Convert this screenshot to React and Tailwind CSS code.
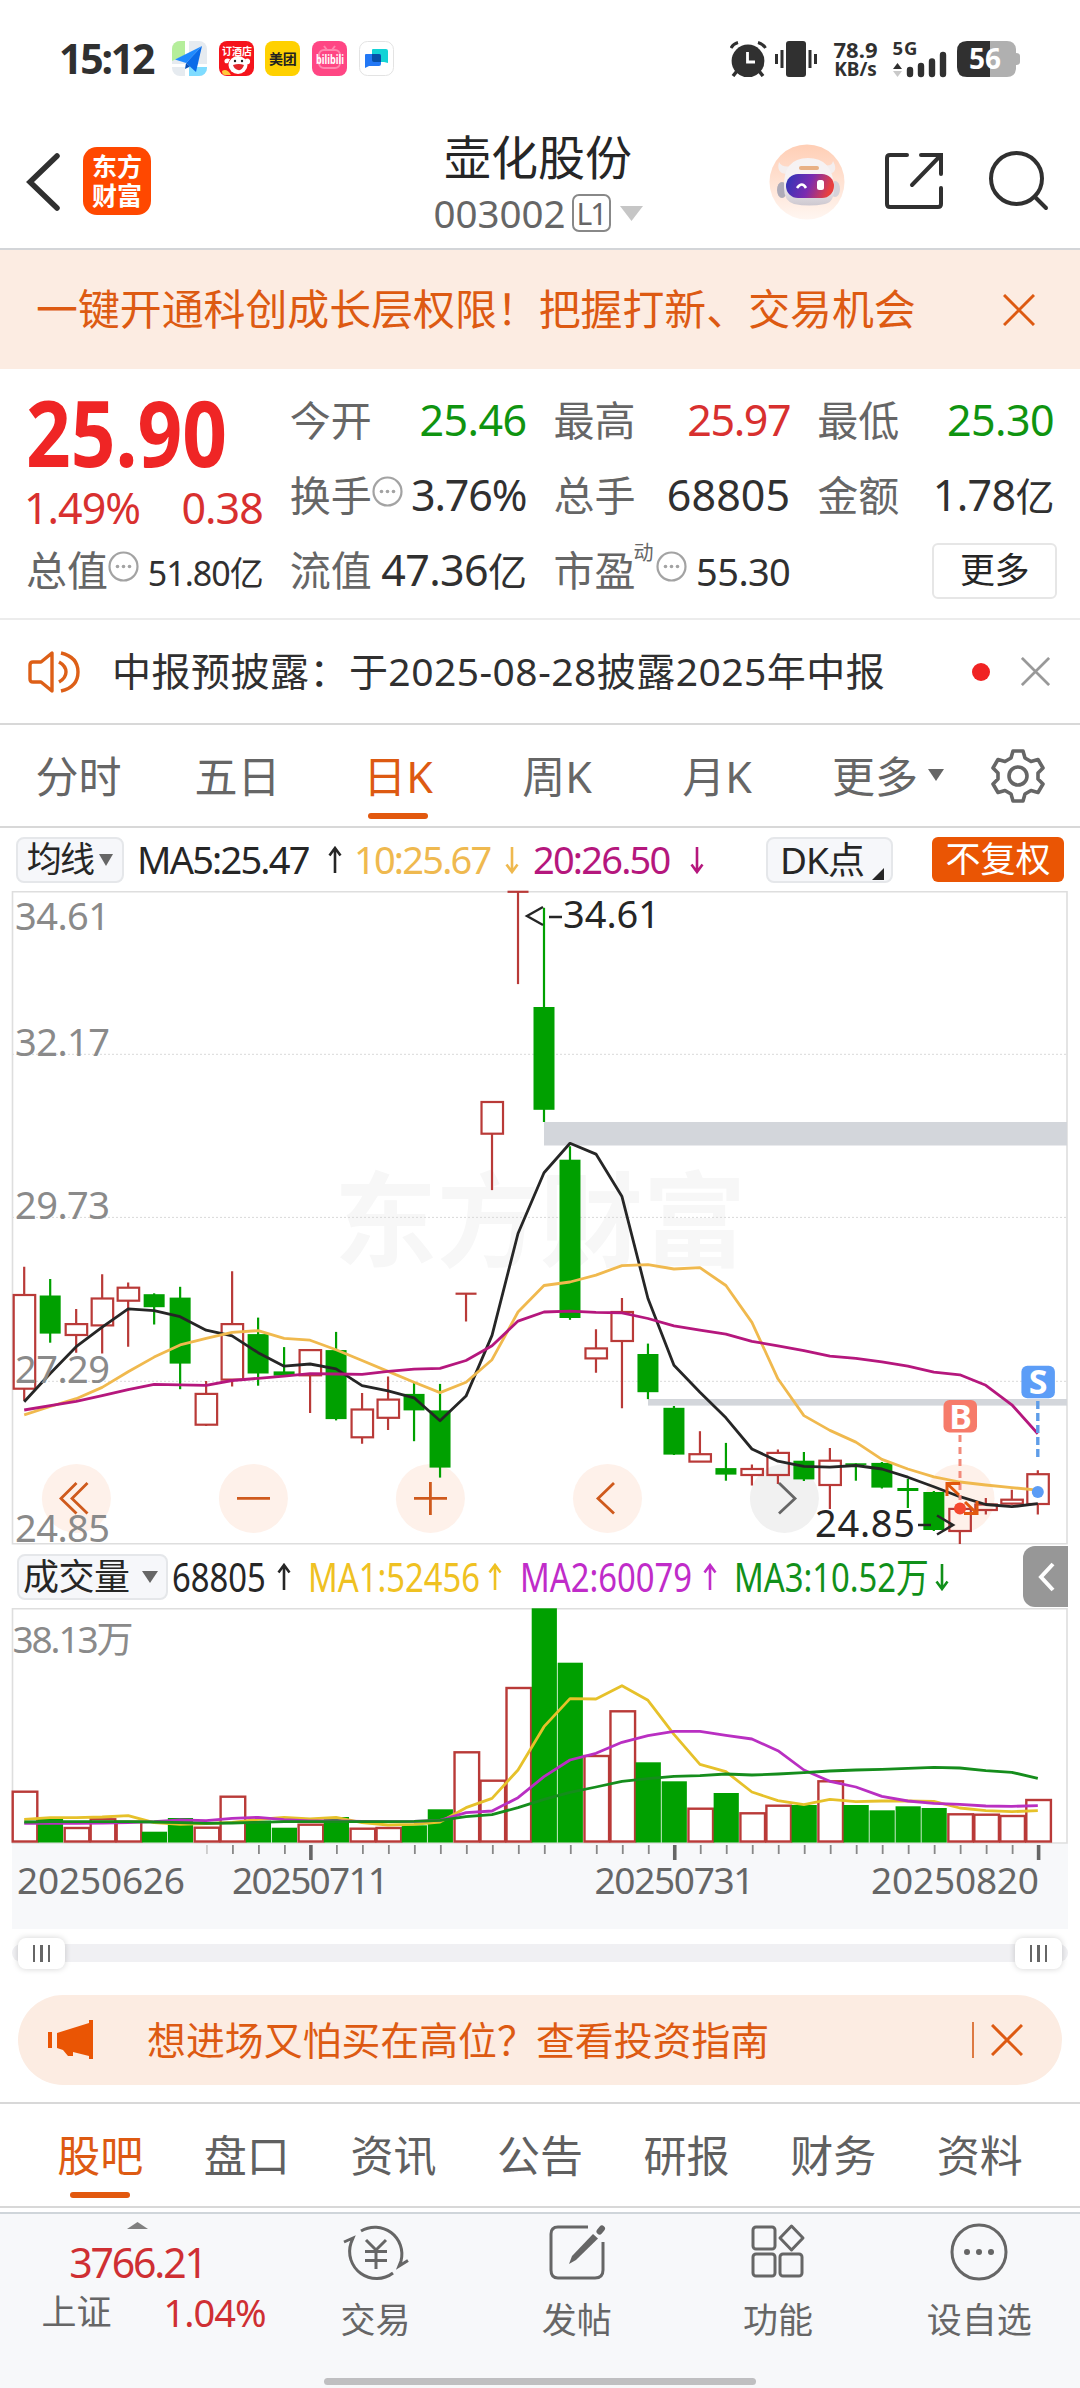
import React from "react";

// [color, high, top, bottom, low]
const candles = [
  ["r", 1266.8, 1295, 1388.7, 1400.4],
  ["g", 1279, 1295.5, 1333.6, 1342.7],
  ["r", 1308.9, 1324.1, 1335, 1352.7],
  ["r", 1274.2, 1298.5, 1325.4, 1353.6],
  ["r", 1282.5, 1287.7, 1300.7, 1346.7],
  ["g", 1293.3, 1294.2, 1307.2, 1324.5],
  ["g", 1286.8, 1297.6, 1363.6, 1389.2],
  ["r", 1380.9, 1393.9, 1424.7, 1426],
  ["r", 1271.2, 1324.1, 1379.6, 1386.6],
  ["g", 1317.6, 1334.1, 1373.5, 1385.7],
  ["g", 1347.1, 1371.4, 1375.7, 1375.7],
  ["r", 1350.1, 1350.1, 1375.3, 1413],
  ["g", 1331.9, 1350.1, 1419.1, 1420.4],
  ["r", 1393, 1409.5, 1437.3, 1443.8],
  ["r", 1376.6, 1399.6, 1417.8, 1429.9],
  ["g", 1383, 1393.9, 1410.4, 1441.2],
  ["g", 1383.9, 1410.4, 1467.6, 1477.6],
  ["r", 1293.7, 1293.7, 1293.7, 1321.5],
  ["r", 1102, 1102, 1133.7, 1190.1],
  ["r", 891.8, 891.8, 891.8, 984.1],
  ["g", 907.8, 1007, 1109.8, 1122],
  ["g", 1146.3, 1159.7, 1318, 1319.8],
  ["r", 1329.3, 1348.4, 1358.4, 1372.7],
  ["r", 1298, 1312, 1341, 1408.2],
  ["g", 1343.6, 1354, 1392.2, 1399.1],
  ["g", 1406, 1407.8, 1454.6, 1455],
  ["r", 1431.2, 1454.2, 1461.6, 1461.6],
  ["g", 1442.9, 1468.1, 1474.6, 1480.7],
  ["r", 1464.6, 1469, 1475, 1485.4],
  ["r", 1449.4, 1452.9, 1475, 1484],
  ["g", 1452, 1460.7, 1479.4, 1481],
  ["r", 1448.1, 1460.7, 1485, 1508.9],
  ["g", 1463.3, 1463.3, 1464.9, 1480.7],
  ["g", 1462, 1462.9, 1487.6, 1488.5],
  ["g", 1478.9, 1488, 1491, 1508],
  ["g", 1491, 1492, 1530, 1531],
  ["r", 1508, 1508.9, 1531, 1544],
  ["r", 1498, 1504.5, 1510, 1514.5],
  ["r", 1489.8, 1499.7, 1503.6, 1504.5],
  ["r", 1470.2, 1474.2, 1504, 1514.5],
];

const ma5 = [
  1401.7, 1373.5, 1346.7, 1327.1, 1308.9, 1310.7, 1316.7, 1330.2, 1335.8,
  1352.7, 1366.2, 1364, 1368.8, 1385.7, 1390.9, 1397.8, 1420.8, 1396.1, 1335.4,
  1233.5, 1172.7, 1143.3, 1154.1, 1196.6, 1298.5, 1365.3, 1392.2, 1417.8, 1449,
  1461.2, 1466.4, 1467.2, 1465.5, 1469, 1477.2, 1486.7, 1496.7, 1504.5, 1506.7,
  1503.7,
];
const ma10 = [
  1414.8, 1406.5, 1398.7, 1387.4, 1371.8, 1357.1, 1344.9, 1338.4, 1332.4,
  1330.6, 1338.4, 1340.2, 1349.7, 1360.5, 1371.4, 1382.2, 1392.6, 1382.2,
  1359.7, 1312, 1285.5, 1282, 1275.1, 1265.6, 1264.7, 1269, 1267.7, 1285.5,
  1322.4, 1378.8, 1415.6, 1430.4, 1442.1, 1459.4, 1469, 1476.8, 1482, 1485,
  1487.6, 1490.2,
];
const ma20 = [
  1410, 1405.6, 1401.3, 1395.7, 1389.6, 1384.4, 1384.8, 1385.3, 1380.5, 1378.3,
  1376.2, 1373.6, 1374, 1374.4, 1371.4, 1369.2, 1368.3, 1360.5, 1345.8, 1321.1,
  1312, 1311.1, 1312.4, 1312.8, 1318.5, 1325.8, 1330.2, 1334.1, 1341.4, 1345.8,
  1350.6, 1356.2, 1358.4, 1361.8, 1366.2, 1372.2, 1374.8, 1385.3, 1404.8,
  1433.8,
];

const volumes = [
  1791.7, 1819, 1828, 1819.3, 1821.7, 1831.7, 1818, 1827.7, 1796.7, 1820.7,
  1827.7, 1824.7, 1817, 1828.7, 1828, 1825.3, 1809.3, 1752.3, 1780.7, 1688,
  1608.3, 1662.7, 1756, 1711.3, 1762.3, 1781.3, 1808.7, 1793, 1813.3, 1805.7,
  1805, 1781.3, 1805, 1810.3, 1806.3, 1808, 1814.3, 1814.7, 1816, 1800,
];
const vma1 = [
  838, 833, 833, 831, 827, 848, 853, 851, 847, 838, 832, 837, 832, 848, 855,
  853, 846, 803, 775, 690, 560, 476, 477, 437, 481, 583, 673, 695, 756, 782,
  794, 778, 785, 783, 783, 784, 804, 812, 815, 812,
].map((v) => 1540 + v / 3);
const vma2 = [
  850, 850, 850, 849, 848, 845, 840, 842, 835, 832, 839, 843, 843, 844, 845,
  844, 841, 818, 813, 773, 710, 660, 640, 607, 587, 574, 574, 586, 597, 632,
  690, 724, 741, 769, 783, 790, 793, 798, 799, 797,
].map((v) => 1540 + v / 3);
const vma3 = [
  846, 845, 845, 845, 845, 846, 848, 850, 849, 847, 845, 845, 845, 845, 845,
  844, 841, 830, 824, 803, 778, 757, 741, 724, 716, 709, 707, 702, 705, 702,
  698, 693, 690, 688, 685, 682, 684, 692, 697, 715,
].map((v) => 1540 + v / 3);

const cx = (i) => 24.2 + 25.99 * i;
const toPoints = (list) => list.map((y, i) => `${cx(i)},${y}`).join(" ");

const RED = "#b93a38";
const GREEN = "#00a000";

const Arrow = ({ down }) => (
  <svg
    className="h-7 w-4 shrink-0"
    viewBox="0 0 16 28"
    fill="none"
    stroke="currentColor"
    strokeWidth="2.6"
  >
    {down ? <path d="M8 1V26M2.5 18.5L8 26L13.5 18.5" /> : <path d="M8 27V2M2.5 9.5L8 2L13.5 9.5" />}
  </svg>
);

const Triangle = ({ className }) => (
  <svg className={className} viewBox="0 0 16 12" preserveAspectRatio="none">
    <path d="M0 0H16L8 12Z" fill="currentColor" />
  </svg>
);

const Close = ({ className }) => (
  <svg className={className} viewBox="0 0 32 32" fill="none" stroke="currentColor" strokeWidth="3">
    <path d="M1 1L31 31M31 1L1 31" />
  </svg>
);

const Info = () => (
  <svg className="size-[31px] shrink-0 text-[#a3a3a3]" viewBox="0 0 31 31">
    <circle cx="15.5" cy="15.5" r="14" fill="none" stroke="currentColor" strokeWidth="2.2" />
    <circle cx="9.5" cy="15.5" r="1.8" fill="currentColor" />
    <circle cx="15.5" cy="15.5" r="1.8" fill="currentColor" />
    <circle cx="21.5" cy="15.5" r="1.8" fill="currentColor" />
  </svg>
);

const StatusBar = () => (
  <div className="flex h-[100px] items-start pt-[41px] pl-[59px] pr-[60px]">
    <span className="w-[113px] text-[41px] leading-[35px] font-bold tracking-[-2.2px] text-[#303030]">
      15:12
    </span>
    <div className="flex gap-[11.7px]">
      {/* Map */}
      <svg className="size-[35px]" viewBox="0 0 35 35">
        <defs>
          <clipPath id="tile">
            <rect width="35" height="35" rx="8" />
          </clipPath>
        </defs>
        <g clipPath="url(#tile)">
          <rect width="35" height="35" fill="#e6ebf0" />
          <path d="M0 0H13V14L0 20Z" fill="#b5ee9b" />
          <path d="M17 24H35V35H17Z" fill="#7fdcff" />
          <path d="M13 0H17V35H13ZM0 23H35V26H0Z" fill="#fff" />
        </g>
        <path d="M30 5L3 18.5L14 22Z" fill="#1f8bff" />
        <path d="M30 5L14 22L24 31Z" fill="#0a6be8" />
        <path d="M14 22L13 28L18 25.5Z" fill="#0550b8" />
      </svg>
      {/* Hotel booking */}
      <svg className="size-[35px]" viewBox="0 0 35 35">
        <rect width="35" height="35" rx="8" fill="#f5141c" />
        <text x="3" y="14" fontSize="10" fontWeight="700" fill="#fff">
          订酒店
        </text>
        <ellipse cx="19" cy="24" rx="9.5" ry="9" fill="#fff" />
        <path d="M11 18C4 15 4 24 9 22ZM26 18C33 15 32 25 28 23Z" fill="#fff" />
        <circle cx="16" cy="20" r="1.2" fill="#222" />
        <circle cx="23" cy="20" r="1.2" fill="#222" />
        <path d="M14 24Q20 22 25 24Q23 30 19 29Q15 28 14 24Z" fill="#e0262b" />
        <path d="M3 30Q8 27 12 34H6Q3 34 3 30Z" fill="#ffc93c" />
      </svg>
      <div className="flex size-[35px] items-center justify-center rounded-lg bg-[#ffd100] text-[14px] font-bold text-[#222]">
        美团
      </div>
      <svg className="size-[35px]" viewBox="0 0 35 35">
        <rect width="35" height="35" rx="8" fill="#ff4684" />
        <rect x="7" y="9" width="21" height="18" rx="5" fill="none" stroke="#ff86ae" strokeWidth="2" />
        <path d="M12 5L15 9M23 5L20 9" stroke="#ff86ae" strokeWidth="2" />
        <text x="4" y="23" fontSize="13" fontWeight="700" fill="#fff" textLength="28" lengthAdjust="spacingAndGlyphs">
          bilibili
        </text>
      </svg>
      <svg className="size-[35px]" viewBox="0 0 35 35">
        <rect x=".5" y=".5" width="34" height="34" rx="8" fill="#fff" stroke="#e3e3e3" />
        <path d="M14 8H27Q29 8 29 10V22L25 21H15Q13 21 13 19V9Q13 8 14 8Z" fill="#12d3d6" />
        <path d="M7 13H20Q22 13 22 15V23Q22 25 20 25H10L6 27V14Q6 13 7 13Z" fill="#2378f5" />
        <path d="M13 13H20Q22 13 22 15V21H15Q13 21 13 19Z" fill="#0750a8" />
      </svg>
    </div>
    <div className="ml-auto flex text-[#303030]">
      <svg className="h-9 w-[88px]" viewBox="0 0 88 36">
        <circle cx="18" cy="20" r="16.4" fill="#303030" />
        <path d="M17.5 11V21H25" fill="none" stroke="#fff" strokeWidth="2.8" />
        <path d="M1 7Q3 3 8 1.5M28 1.5Q33 3 35.5 7" fill="none" stroke="#303030" strokeWidth="3" />
        <path d="M7 30L3 35M29 30L33 35" stroke="#303030" strokeWidth="3.5" />
        <rect x="56" width="20" height="36" rx="3" fill="#303030" />
        <path d="M46.5 13V23M52 9V27M80 9V27M85.5 13V23" stroke="#303030" strokeWidth="3" />
      </svg>
      <div className="ml-[14px] flex w-[47px] flex-col items-center font-bold">
        <span className="text-[22px] leading-[16px]">78.9</span>
        <span className="mt-[4px] text-[19px] leading-[16px]">KB/s</span>
      </div>
      <svg className="ml-[14px] h-9 w-[56px] overflow-visible" viewBox="0 0 56 36">
        <text x="-0.5" y="14" fontSize="18.5" fontWeight="700" fill="#303030" textLength="25">
          5G
        </text>
        <path d="M0 28L4.5 22L9 28Z" fill="#303030" />
        <path d="M0 30L4.5 36L9 30Z" fill="#c9c9c9" />
        <path d="M17 29V33M28 25V33M39 20.5V33M50 14V33" stroke="#303030" strokeWidth="6.4" strokeLinecap="round" />
      </svg>
      <svg className="ml-[8px] h-9 w-[63px]" viewBox="0 0 63 36">
        <path d="M10 0H33V36H10Q0 36 0 26V10Q0 0 10 0Z" fill="#303030" />
        <path d="M33 0H50Q58 0 59 8V12Q63 12 63 15V21Q63 24 59 24V28Q58 36 50 36H33Z" fill="#b0b0b0" />
        <text x="12" y="28" fontSize="28" fontWeight="700" fill="#fff">
          56
        </text>
      </svg>
    </div>
  </div>
);

const Header = () => (
  <div className="flex h-[150px] items-start border-b-2 border-[#d3d5d8]">
    <svg className="mt-[51px] ml-[26px] h-[62px] w-[35px]" viewBox="0 0 35 62">
      <path d="M31 5L4 31L31 57" fill="none" stroke="#303030" strokeWidth="5.5" strokeLinecap="round" />
    </svg>
    <div className="mt-[47px] ml-[22px] flex h-[68px] w-[68px] items-center justify-center rounded-[14px] bg-[#ff4800] text-center text-[25px] leading-[29px] font-bold text-white">
      东方
      <br />
      财富
    </div>
    <div className="ml-[219px] flex w-[336px] flex-col items-center pt-[30px]">
      <h1 className="text-[47px] leading-[54px] text-[#262626]">壶化股份</h1>
      <div className="mt-[7px] flex items-center text-[#666]">
        <span className="text-[38.5px] leading-[44px]">003002</span>
        <span className="ml-1.5 flex h-[38px] w-[39px] items-center justify-center rounded-[7px] border-2 border-[#888] text-[30px] tracking-[-2px]">
          L1
        </span>
        <Triangle className="ml-[9px] h-[15px] w-[23px] text-[#c6c6c6]" />
      </div>
    </div>
    {/* Assistant avatar */}
    <svg className="mt-[44px] ml-[63px] size-[76px]" viewBox="0 0 76 76">
      <defs>
        <linearGradient id="halo" x1="0" y1="0" x2="0" y2="1">
          <stop offset="0" stopColor="#ffceb5" />
          <stop offset="1" stopColor="#fff6f1" />
        </linearGradient>
        <linearGradient id="shell" x1="0" y1="0" x2="0" y2="1">
          <stop offset="0.5" stopColor="#f6f2f3" />
          <stop offset="1" stopColor="#cdc8d0" />
        </linearGradient>
        <linearGradient id="visor" x1="0" y1="0" x2="1" y2="0.2">
          <stop offset="0" stopColor="#2b35b8" />
          <stop offset="0.55" stopColor="#7a2bb0" />
          <stop offset="1" stopColor="#e8403f" />
        </linearGradient>
      </defs>
      <circle cx="38" cy="38" r="37.5" fill="url(#halo)" />
      <path d="M10 18Q7 29 17 30L23 22Q13 24 10 18ZM64 17Q70 28 60 30L54 21Q63 23 64 17Z" fill="#f4eeee" />
      <ellipse cx="13" cy="46" rx="5" ry="8" fill="#aeabb8" />
      <ellipse cx="66" cy="45" rx="5" ry="8" fill="#d5d2da" />
      <path d="M15 44Q14 14 39 14Q63 14 65 42Q66 58 56 60Q40 63 25 60Q15 57 15 44Z" fill="url(#shell)" />
      <rect x="30" y="22" width="20" height="4" rx="2" fill="#e8b085" />
      <rect x="17" y="30" width="48" height="24" rx="12" fill="url(#visor)" />
      <path d="M28 44Q33 37 37 44" fill="none" stroke="#fff" strokeWidth="2.6" />
      <rect x="48" y="36" width="7" height="10" rx="2.5" fill="#fff" />
    </svg>
    <svg className="mt-[51px] ml-[39px] size-[60px]" viewBox="0 0 60 60" fill="none" stroke="#303030" strokeWidth="4">
      <path d="M23 4H6Q3 4 3 7V53Q3 56 6 56H54Q57 56 57 53V37M37 4H57V23M57 4L28 34" strokeLinecap="round" />
    </svg>
    <svg className="mt-[50px] ml-[44px] size-[61px]" viewBox="0 0 61 61" fill="none" stroke="#303030" strokeWidth="4">
      <circle cx="28.5" cy="28.5" r="25.5" />
      <path d="M46.5 46.5L58 58" strokeLinecap="round" />
    </svg>
  </div>
);

const Quote = () => (
  <div className="grid h-[251px] grid-cols-4 grid-rows-[75px_75px_75px] gap-x-[27px] border-b-2 border-[#ececec] px-[26px] pt-[14px] text-[43px] tracking-[-0.6px] text-[#303030]">
    <div className="row-span-2 flex flex-col text-[#d8302f]">
      <span className="mt-[3px] origin-left scale-x-[0.86] text-[91px] leading-[92px] font-bold tracking-normal text-[#ef2525]">
        25.90
      </span>
      <div className="mt-[6px] flex justify-between text-[43px] leading-[48px] tracking-[-1px]">
        <span className="-ml-0.5">1.49%</span>
        <span>0.38</span>
      </div>
    </div>
    <Cell label="今开">
      <span className="text-[#0f9410]">25.46</span>
    </Cell>
    <Cell label="最高">
      <span className="tracking-[-1.4px] text-[#d8302f]">25.97</span>
    </Cell>
    <Cell label="最低">
      <span className="text-[#0f9410]">25.30</span>
    </Cell>
    <Cell label="换手" info>
      <span className="tracking-[-1.1px]">3.76%</span>
    </Cell>
    <Cell label="总手">
      <span className="tracking-[0.1px]">68805</span>
    </Cell>
    <Cell label="金额">
      1.78<span className="text-[39px]">亿</span>
    </Cell>
    <Cell label="总值" info>
      <span className="text-[34px] tracking-[-1px]">51.80亿</span>
    </Cell>
    <Cell label="流值">
      47.36<span className="text-[39px]">亿</span>
    </Cell>
    <Cell label="市盈" info sup="动">
      <span className="text-[38px]">55.30</span>
    </Cell>
    <div className="-mr-[3px] flex h-[56px] w-[125px] items-center justify-center place-self-end self-center rounded-md border-2 border-[#e6e6e6] text-[35px] text-[#262626]">
      更多
    </div>
  </div>
);

const Cell = ({ label, info, sup, children }) => (
  <div className="flex items-center whitespace-nowrap">
    <span className="text-[41px] tracking-normal text-[#666]">{label}</span>
    {sup && <span className="mb-9 -ml-0.5 w-[22px] text-[20px] text-[#666]">{sup}</span>}
    {info && (
      <span className="mb-2">
        <Info />
      </span>
    )}
    <span className="ml-auto">{children}</span>
  </div>
);

const News = () => (
  <div className="flex h-[105px] items-center border-b-2 border-[#d8d8d8] pl-[28px] pr-[30px]">
    <svg className="h-[46px] w-[54px]" viewBox="0 0 54 46" fill="none" stroke="#dd5f17" strokeWidth="3.4">
      <path d="M24 4V42L13 33H5Q2 33 2 30V16Q2 13 5 13H13Z" strokeLinejoin="round" />
      <path d="M31 13Q38 17 38 23Q38 29 31 33M33 4Q50 8 50 23Q50 38 33 42" />
    </svg>
    <p className="ml-[30px] text-[39px] tracking-[0.48px] whitespace-nowrap text-[#303030]">
      中报预披露：于2025-08-28披露2025年中报
    </p>
    <span className="mr-[31px] ml-auto size-[18px] rounded-full bg-[#f02323]" />
    <Close className="size-[29px] text-[#999]" />
  </div>
);

const periodTabs = [
  { name: "分时", width: "w-[157px]" },
  { name: "五日", width: "w-[161px]" },
  { name: "日K", width: "w-[160px]", active: true },
  { name: "周K", width: "w-[158px]" },
  { name: "月K", width: "w-[162px]" },
];

const PeriodTabs = () => (
  <div className="flex h-[103px] items-stretch border-b-2 border-[#d8d8d8] text-[43px] text-[#666]">
    {periodTabs.map((tab) => (
      <div key={tab.name} className={`flex flex-col items-center pt-[22px] ${tab.width}`}>
        <span className={tab.active ? "leading-[60px] text-[#dd5a12]" : "leading-[60px]"}>{tab.name}</span>
        {tab.active && <span className="mt-[6px] h-1.5 w-[60px] rounded-full bg-[#e2580e]" />}
      </div>
    ))}
    <div className="ml-[34px] flex items-start pt-[22px] leading-[60px]">
      更多
      <Triangle className="mt-[22px] ml-[10px] h-3 w-4" />
    </div>
    <svg className="mt-[24px] ml-[47px] size-[54px]" viewBox="0 0 54 54" fill="none" stroke="#666" strokeWidth="3.6" strokeLinejoin="round">
      <path d="M22 2H32L34 9L40 12.5L47 10.5L52 19L47 24V30L52 35L47 43.5L40 41.5L34 45L32 52H22L20 45L14 41.5L7 43.5L2 35L7 30V24L2 19L7 10.5L14 12.5L20 9Z" />
      <circle cx="27" cy="27" r="9" />
    </svg>
  </div>
);

const MaBar = () => (
  <div className="flex h-[63px] items-center pl-4 text-[38px] tracking-[-1.8px] whitespace-nowrap">
    <div className="flex h-[46px] w-[108px] items-center justify-center gap-1.5 rounded-lg border-2 border-[#e5e7ea] bg-[#f6f7fa] text-[35px] text-[#262626]">
      均线
      <Triangle className="h-3 w-3.5 text-[#666]" />
    </div>
    <div className="ml-[13px] flex w-[206px] items-center justify-between text-[#262626]">
      MA5:25.47
      <Arrow />
    </div>
    <div className="ml-[11px] flex w-[166px] items-center justify-between text-[#efb94f]">
      10:25.67
      <Arrow down />
    </div>
    <div className="ml-[13px] flex w-[172px] items-center justify-between text-[#b5177d]">
      20:26.50
      <Arrow down />
    </div>
    <div className="ml-[61px] flex h-[46px] w-[127px] items-center rounded-lg border-2 border-[#e5e7ea] bg-[#f6f7fa] pl-3 text-[37px] tracking-[-1px] text-[#262626]">
      DK点
      <svg className="mt-7 ml-2 size-3" viewBox="0 0 12 12">
        <path d="M12 0V12H0Z" fill="#262626" />
      </svg>
    </div>
    <div className="ml-[39px] flex h-[45px] w-[132px] items-center justify-center rounded-md bg-[#ea5504] text-[35px] tracking-normal text-white">
      不复权
    </div>
  </div>
);

const axisLabels = [
  ["34.61", 930],
  ["32.17", 1056],
  ["29.73", 1218.5],
  ["27.29", 1382.5],
  ["24.85", 1542],
];

const PriceChart = () => (
  <svg className="block h-[654px] w-[1080px] overflow-visible" viewBox="0 891 1080 654">
    <text x="334" y="1259" fontSize="103" fontWeight="700" fill="#f7f7f7">
      东方财富
    </text>
    <path d="M12 1054.3H1067M12 1217.4H1067M12 1381.3H1067" stroke="#d9d9d9" strokeWidth="1" strokeDasharray="2 2" />
    <path d="M12.5 891.8H1067V1543.8H12.5Z" fill="none" stroke="#dedede" strokeWidth="1.6" />
    <rect x="544" y="1122" width="523" height="23.5" fill="#d3d6db" />
    <rect x="648" y="1399" width="419" height="6.6" fill="#d3d6db" />

    {/* Control backgrounds */}
    <g fill="#fef1ea">
      <circle cx="76.4" cy="1498.4" r="34.5" />
      <circle cx="253.4" cy="1498.4" r="34.5" />
      <circle cx="430.4" cy="1498.4" r="34.5" />
      <circle cx="607.5" cy="1498.4" r="34.5" />
      <circle cx="784.4" cy="1498.4" r="34.5" fill="#f1f1f1" />
      <circle cx="960" cy="1498.4" r="34.5" />
    </g>

    {candles.map(([color, high, top, bottom, low], i) =>
      color === "g" ? (
        <g key={i} fill={GREEN}>
          <rect x={cx(i) - 1.1} y={high} width="2.2" height={low - high} />
          <rect x={cx(i) - 10.5} y={top} width="21" height={bottom - top} />
        </g>
      ) : (
        <g key={i} fill="none" stroke={RED} strokeWidth="2.2">
          <path d={`M${cx(i)} ${high}V${top}M${cx(i)} ${bottom}V${low}`} />
          {top === bottom ? (
            <path d={`M${cx(i) - 10.5} ${top}h21`} />
          ) : (
            <rect x={cx(i) - 10.5} y={top} width="21.5" height={bottom - top} />
          )}
        </g>
      )
    )}

    <g fill="none" strokeWidth="2.8" strokeLinejoin="round">
      <polyline points={toPoints(ma5)} stroke="#262626" />
      <polyline points={toPoints(ma10)} stroke="#f0b94e" />
      <polyline points={toPoints(ma20)} stroke="#b5177d" />
    </g>

    <g fill="none" stroke="#cf5a1d" strokeWidth="2.8">
      <path d="M76.5 1483L61 1498.4L76.5 1513.5M87.5 1483L72 1498.4L87.5 1513.5" />
      <path d="M237 1498.4H270M414 1498.4H447M430.4 1482V1515" />
      <path d="M614 1483L598 1498.4L614 1513.5" />
      <path d="M779 1483L795 1498.4L779 1513.5" stroke="#666" />
    </g>

    <g fontSize="38" fill="#8a8a8a">
      {axisLabels.map(([label, y]) => (
        <text key={label} x="15" y={y} textLength="95">
          {label}
        </text>
      ))}
    </g>

    <g fontSize="38" fill="#262626" stroke="none">
      <text x="563" y="928" textLength="97">
        34.61
      </text>
      <text x="815" y="1537" textLength="100">
        24.85
      </text>
      <path d="M543 907L527 916L543 925M549 917H562" fill="none" stroke="#262626" strokeWidth="2.4" />
      <path d="M918 1525H931M937 1515.5L953 1525L937 1534.5" fill="none" stroke="#262626" strokeWidth="2.6" />
    </g>

    {/* Buy / sell marks */}
    <path d="M960 1435V1500" stroke="#f28a7a" strokeWidth="3" strokeDasharray="7 5" />
    <path d="M1037.8 1401V1457" stroke="#5f9de8" strokeWidth="3.4" strokeDasharray="8 4" />
    <circle cx="960" cy="1508.5" r="6" fill="#f5482f" />
    <circle cx="1037.8" cy="1492" r="6" fill="#5b9cf5" />
    <rect x="943.5" y="1400" width="33.5" height="32.5" rx="6" fill="#f67b6a" />
    <rect x="1021.4" y="1365.7" width="33.5" height="32.5" rx="6" fill="#5c9df7" />
    <g fontSize="34" fontWeight="700" fill="#fff" textAnchor="middle">
      <text x="960.5" y="1428.5">
        B
      </text>
      <text x="1038" y="1394">
        S
      </text>
    </g>
    <path d="M947 1496V1483.5H960M947 1483.5L959 1495M977 1501V1513.5H964M977 1513.5L965 1502" fill="none" stroke="#e2580e" strokeWidth="3" />
  </svg>
);

const Condensed = ({ children }) => (
  <span className="inline-block w-0 flex-1 origin-left scale-x-[0.82]">{children}</span>
);

const VolumeBar = () => (
  <div className="flex h-[63px] items-center pl-[17px] text-[40px] whitespace-nowrap">
    <div className="flex h-[46px] w-[151px] items-center justify-between rounded-lg border-2 border-[#e5e7ea] bg-[#f6f7fa] pr-2 pl-1 text-[36px] tracking-[-0.5px] text-[#262626]">
      成交量
      <Triangle className="h-3 w-4 text-[#666]" />
    </div>
    <div className="ml-[4px] flex w-[120px] items-center text-[#262626]">
      <Condensed>68805</Condensed>
      <Arrow />
    </div>
    <div className="ml-[16px] flex w-[195px] items-center text-[#efc122]">
      <Condensed>MA1:52456</Condensed>
      <Arrow />
    </div>
    <div className="ml-[17px] flex w-[198px] items-center text-[#c02cc9]">
      <Condensed>MA2:60079</Condensed>
      <Arrow />
    </div>
    <div className="ml-[16px] flex w-[216px] items-center text-[#11901a]">
      <Condensed>MA3:10.52万</Condensed>
      <Arrow down />
    </div>
    <div className="mr-[12px] ml-auto flex h-[61px] w-[45px] items-center justify-center rounded-l-xl bg-[#979797]">
      <svg className="h-8 w-5" viewBox="0 0 20 32">
        <path d="M17 3L5 16L17 29" fill="none" stroke="#fff" strokeWidth="4" />
      </svg>
    </div>
  </div>
);

const ticks = Array.from({ length: 33 }, (_, i) => i + 7);

const VolumeChart = () => (
  <svg className="block h-[321px] w-[1080px]" viewBox="0 1608 1080 321">
    <rect x="12" y="1843" width="1056" height="86" fill="#f7f8fa" />
    <path d="M12.5 1608.8H1067V1843H12.5Z" fill="none" stroke="#dedede" strokeWidth="1.6" />
    <text x="12.5" y="1652.5" fontSize="37" fill="#8a8a8a" textLength="121">
      38.13万
    </text>
    {volumes.map((y, i) =>
      candles[i][0] === "g" ? (
        <rect key={i} x={cx(i) - 12.3} y={y} width="25.2" height={1842.5 - y} fill={GREEN} />
      ) : (
        <rect
          key={i}
          x={cx(i) - 11.5}
          y={y}
          width="24.6"
          height={1841.5 - y}
          fill="#fff"
          stroke={RED}
          strokeWidth="2.4"
        />
      )
    )}
    <g fill="none" strokeWidth="2.8" strokeLinejoin="round">
      <polyline points={toPoints(vma1)} stroke="#e6c12a" />
      <polyline points={toPoints(vma2)} stroke="#b92fc2" />
      <polyline points={toPoints(vma3)} stroke="#158d1c" />
    </g>
    {ticks.map((i) =>
      i === 11 || i === 25 || i === 39 ? (
        <path key={i} d={`M${cx(i) + 0.8} 1845V1860`} stroke="#666" strokeWidth="3.6" />
      ) : (
        <path key={i} d={`M${cx(i) + 0.8} 1845V1854`} stroke={i === 7 ? "#ccc" : "#888"} strokeWidth="1.8" />
      )
    )}
    <g fontSize="37" fill="#666">
      <text x="17" y="1894" textLength="168">20250626</text>
      <text x="232" y="1894" textLength="157">20250711</text>
      <text x="594.5" y="1894" textLength="160">20250731</text>
      <text x="871" y="1894" textLength="168">20250820</text>
    </g>
  </svg>
);

const Thumb = () => (
  <div className="flex h-[31px] w-[47px] items-center justify-center gap-[5px] rounded-lg bg-white shadow-[0_0_6px_rgba(0,0,0,0.18)]">
    <span className="h-[17px] w-[2.5px] bg-[#666]" />
    <span className="h-[17px] w-[2.5px] bg-[#666]" />
    <span className="h-[17px] w-[2.5px] bg-[#666]" />
  </div>
);

const RangeSlider = () => (
  <div className="flex h-[66px] items-start px-3 pt-[15px]">
    <div className="flex h-[18px] w-full items-center justify-between rounded-full bg-[#f0f0f3] px-[6px]">
      <Thumb />
      <Thumb />
    </div>
  </div>
);

const Promo = () => (
  <div className="mx-[18px] mb-[17px] flex h-[90px] items-center rounded-full bg-[#fcece2] pr-[39px] pl-[30px] text-[#dd5a12]">
    <svg className="h-[40px] w-[46px]" viewBox="0 0 46 40" fill="#ea5504">
      <path d="M0 12H4V28H0ZM9 13L41 3V0H45V39H41V36L25 32V36H20L15 30L9 28Z" />
    </svg>
    <p className="ml-[53px] text-[38.9px] whitespace-nowrap">想进场又怕买在高位？查看投资指南</p>
    <span className="mr-[17px] ml-auto h-9 w-[2px] bg-[#dd7a43]" />
    <Close className="size-8" />
  </div>
);

const sections = ["股吧", "盘口", "资讯", "公告", "研报", "财务", "资料"];

const SectionTabs = () => (
  <div className="flex h-[106px] border-y-2 border-[#d8d8d8] px-[27px] text-[43px] text-[#606060]">
    {sections.map((name, i) => (
      <div key={name} className="flex flex-1 flex-col items-center pt-[22px]">
        <span className={i === 0 ? "leading-[60px] text-[#dd5a12]" : "leading-[60px]"}>{name}</span>
        {i === 0 && <span className="mt-[6px] h-1.5 w-[60px] rounded-full bg-[#e2580e]" />}
      </div>
    ))}
  </div>
);

const navItems = [
  {
    name: "交易",
    icon: (
      <>
        <path d="M15 9A27 27 0 0 1 55 39L53 44L62 38.5M-2 20L7 16L5 21A27 27 0 0 0 47 51" />
        <path d="M20 18L30 28L40 18M19 29.5H41M19 38.5H41M30 28V47" />
      </>
    ),
  },
  {
    name: "发帖",
    icon: (
      <>
        <path d="M41 5H11Q4 5 4 12V48Q4 56 11 56H48Q56 56 56 48V20" />
        <path d="M52.5 9.5L55 6.5" strokeWidth="6" strokeLinecap="round" />
        <path d="M46 12L51 16.5L29 38L22 42L25 34Z" fill="#666" stroke="none" />
      </>
    ),
  },
  {
    name: "功能",
    icon: (
      <>
        <rect x="5" y="5" width="22" height="22" rx="3" />
        <rect x="5" y="32" width="22" height="22" rx="3" />
        <rect x="32" y="32" width="22" height="22" rx="3" />
        <path d="M43.5 4L55 16L43.5 28L32 16Z" strokeLinejoin="round" />
      </>
    ),
  },
  {
    name: "设自选",
    icon: (
      <>
        <circle cx="30" cy="30" r="27" />
        <path d="M18 30h.01M30 30h.01M42 30h.01" strokeWidth="6" strokeLinecap="round" />
      </>
    ),
  },
];

const BottomBar = () => (
  <div className="mt-[4px] flex h-[176px] flex-col border-t-2 border-[#cfd5da] bg-[#f7f8fa]">
    <div className="flex h-[164px]">
      <div className="flex w-[275px] flex-col items-center pt-[8px] text-[#cf2f33]">
        <svg className="h-[7px] w-[21px]" viewBox="0 0 21 7">
          <path d="M0 7L10.5 0L21 7Z" fill="#808080" />
        </svg>
        <span className="mt-[6px] text-[41px] leading-[54px] tracking-[-2.2px]">3766.21</span>
        <div className="ml-[32px] flex w-[224px] items-center justify-between text-[38px] leading-[46px] tracking-[-1px]">
          <span className="text-[35px] tracking-normal text-[#666]">上证</span>
          1.04%
        </div>
      </div>
      {navItems.map((item) => (
        <div key={item.name} className="flex flex-1 flex-col items-center pt-[8px] text-[35px] text-[#666]">
          <svg className="size-[60px] overflow-visible" viewBox="0 0 60 60" fill="none" stroke="#666" strokeWidth="3">
            {item.icon}
          </svg>
          <span className="mt-[13px] leading-[50px]">{item.name}</span>
        </div>
      ))}
    </div>
    <div className="mx-auto h-[7px] w-[432px] rounded-full bg-[#bfbfc1]" />
  </div>
);

const App = () => {
  return (
    <div
      lang="zh-CN"
      className="h-[2388px] w-[1080px] overflow-hidden bg-white font-['Noto_Sans','Noto_Sans_CJK_SC',sans-serif]"
    >
      <StatusBar />
      <Header />
      <div className="flex h-[119px] items-center justify-between bg-[#fcece2] pr-[45px] pl-[36px] text-[41.9px] text-[#dd5a12]">
        <p className="whitespace-nowrap">一键开通科创成长层权限！把握打新、交易机会</p>
        <Close className="size-8" />
      </div>
      <Quote />
      <News />
      <PeriodTabs />
      <MaBar />
      <PriceChart />
      <VolumeBar />
      <VolumeChart />
      <RangeSlider />
      <Promo />
      <SectionTabs />
      <BottomBar />
    </div>
  );
};

export default App;
